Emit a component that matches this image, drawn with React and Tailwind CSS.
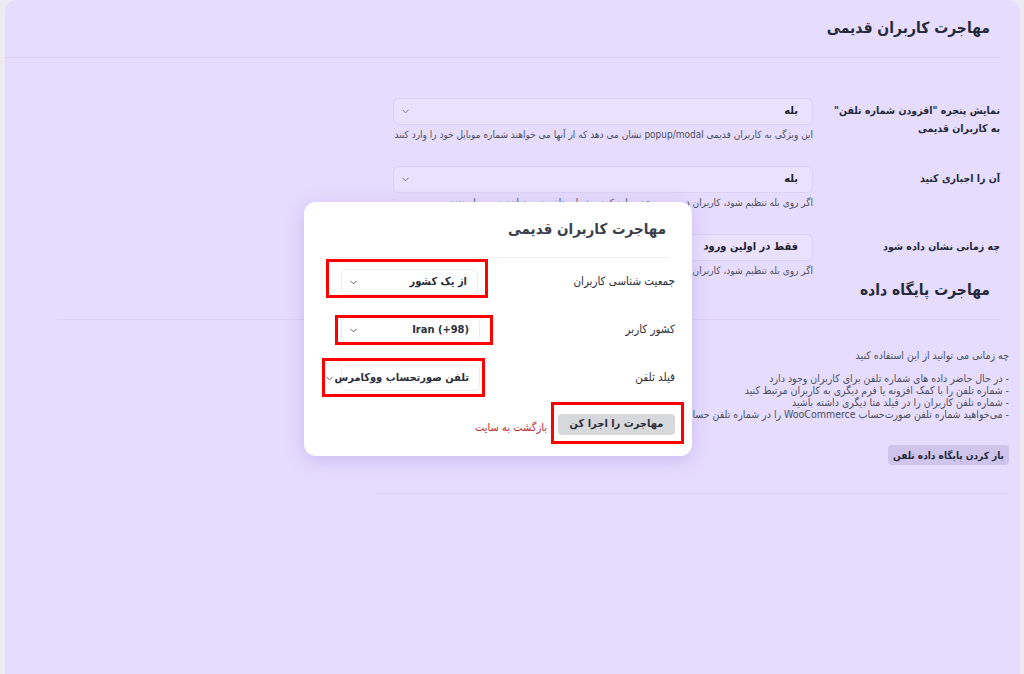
import React from 'react';
import { ChevronDown } from 'lucide-react';

const FONT = "font-['DejaVu_Sans_Condensed','DejaVu_Sans',sans-serif]";

const PageSelect = ({ value }) => (
  <div className="flex h-[27px] w-[420px] items-center justify-between rounded-md border border-[#dcd2f5] bg-[#e9e1fd] pl-[6px] pr-[14px]">
    <span className="text-[11px] font-bold text-[#1f2330]">{value}</span>
    <ChevronDown size={11} strokeWidth={2} className="text-[#6b6f80]" />
  </div>
);

const ModalSelect = ({ value, width = 'w-[137px]' }) => (
  <div
    className={`flex h-[26px] ${width} items-center justify-between rounded-md border border-[#ececf2] bg-white pl-[6px] pr-[10px]`}
  >
    <span className="whitespace-nowrap text-[11px] font-bold text-[#2b2f3a]">{value}</span>
    <ChevronDown size={11} strokeWidth={2} className="shrink-0 text-[#555]" />
  </div>
);

const rows = [
  {
    label: 'نمایش پنجره "افزودن شماره تلفن" به کاربران قدیمی',
    value: 'بله',
    desc: 'این ویژگی به کاربران قدیمی popup/modal نشان می دهد که از آنها می خواهند شماره موبایل خود را وارد کنند',
  },
  {
    label: 'آن را اجباری کنید',
    value: 'بله',
    desc: 'اگر روی بله تنظیم شود، کاربران در صورت عدم وارد کردن شماره تلفن نمی توانند پنجره را ببندند',
  },
  {
    label: 'چه زمانی نشان داده شود',
    value: 'فقط در اولین ورود',
    desc: 'اگر روی بله تنظیم شود، کاربران فقط در اولین ورود این پنجره را مشاهده می کنند',
  },
];

const usage = [
  '- در حال حاضر داده های شماره تلفن برای کاربران وجود دارد',
  '- شماره تلفن را با کمک افزونه یا فرم دیگری به کاربران مرتبط کنید',
  '- شماره تلفن کاربران را در فیلد متا دیگری داشته باشید',
  '- می‌خواهید شماره تلفن صورت‌حساب WooCommerce را در شماره تلفن حساب کاربری همگام‌سازی کنید',
];

const Modal = () => (
  <div className="absolute left-[304px] top-[202px] h-[254px] w-[388px] rounded-xl bg-white shadow-[0_4px_18px_rgba(120,90,200,0.25)]">
    <div className="mx-[24px] flex h-[56px] items-center border-b border-[#ececf2] pr-[2px]">
      <h3 className="text-[15px] font-semibold text-[#3a3f4b]">مهاجرت کاربران قدیمی</h3>
    </div>

    <div className="pl-[37px] pr-[17px]">
      <div className="flex h-[48px] items-center justify-between">
        <span className="text-[11.5px] text-[#2b2f3a]">جمعیت شناسی کاربران</span>
        <ModalSelect value="از یک کشور" />
      </div>
      <div className="flex h-[48px] items-center justify-between">
        <span className="text-[11.5px] text-[#2b2f3a]">کشور کاربر</span>
        <ModalSelect value="Iran (+98)" width="w-[139px]" />
      </div>
      <div className="flex h-[48px] items-center justify-between">
        <span className="text-[11.5px] text-[#2b2f3a]">فیلد تلفن</span>
        <ModalSelect value="تلفن صورتحساب ووکامرس" width="w-[139px]" />
      </div>
    </div>

    <div className="mt-[10px] flex items-center gap-[11px] pr-[17px]">
      <button className="h-[21px] w-[117px] rounded bg-[#d7d8dc] text-[11px] font-bold text-[#2b2f3a]">
        مهاجرت را اجرا کن
      </button>
      <a className="mt-[8px] text-[11px] text-[#c0262d]">بازگشت به سایت</a>
    </div>

    {/* highlight boxes drawn over the screenshot */}
    <div className="pointer-events-none absolute left-[22px] top-[57px] h-[39px] w-[162px] border-[3px] border-[#ff0000]" />
    <div className="pointer-events-none absolute left-[31px] top-[113px] h-[30px] w-[158px] border-[3px] border-[#ff0000]" />
    <div className="pointer-events-none absolute left-[18px] top-[156px] h-[39px] w-[163px] border-[3px] border-[#ff0000]" />
    <div className="pointer-events-none absolute left-[247px] top-[200px] h-[42px] w-[133px] border-[3px] border-[#ff0000]" />
  </div>
);

const App = () => {
  return (
    <div dir="rtl" className={`relative min-h-[674px] bg-[#ecebf2] pl-[5px] pr-[4px] ${FONT}`}>
      <div className="min-h-[674px] rounded-t-xl bg-[#e6dcfe]">
        <div className="mr-[20px] flex h-[58px] items-center border-b border-[#ddd1f7] pr-[10px]">
          <h2 className="text-[15.5px] font-bold text-[#252a3a]">مهاجرت کاربران قدیمی</h2>
        </div>

        <div className="mr-[20px] pt-[40px]">
          {rows.map((row, i) => (
            <div key={i} className="mb-[24px] flex gap-[9px]">
              <div className="w-[178px] pt-[3px] text-[10.5px] font-bold leading-[18px] text-[#252a3a]">
                {row.label}
              </div>
              <div className="w-[420px]">
                <PageSelect value={row.value} />
                <p className="mt-[3px] whitespace-nowrap text-[10px] leading-[14px] text-[#4a4f5e]">
                  {row.desc}
                </p>
              </div>
            </div>
          ))}
        </div>

        <div className="ml-[52px] mr-[19px] mt-[-23px] flex h-[41px] items-start border-b border-[#ddd1f7] pr-[11px]">
          <h2 className="text-[15.5px] font-bold text-[#252a3a]">مهاجرت پایگاه داده</h2>
        </div>

        <div className="ml-[20px] mr-[11px] w-[634px] border-b border-[#ddd1f7] pb-[27px] pt-[28px]">
          <p className="text-[10.5px] leading-[14px] text-[#4a4f5e]">چه زمانی می توانید از این استفاده کنید</p>
          <div className="mt-[10px] text-[10.5px] leading-[12px] text-[#4a4f5e]">
            {usage.map((line, i) => (
              <p key={i} className="whitespace-nowrap">
                {line}
              </p>
            ))}
          </div>
          <button className="mt-[25px] h-[20px] rounded bg-[#cfc4ec] px-[5px] text-[10px] font-bold text-[#252a3a]">
            باز کردن پایگاه داده تلفن
          </button>
        </div>
      </div>

      <Modal />
    </div>
  );
};

export default App;
